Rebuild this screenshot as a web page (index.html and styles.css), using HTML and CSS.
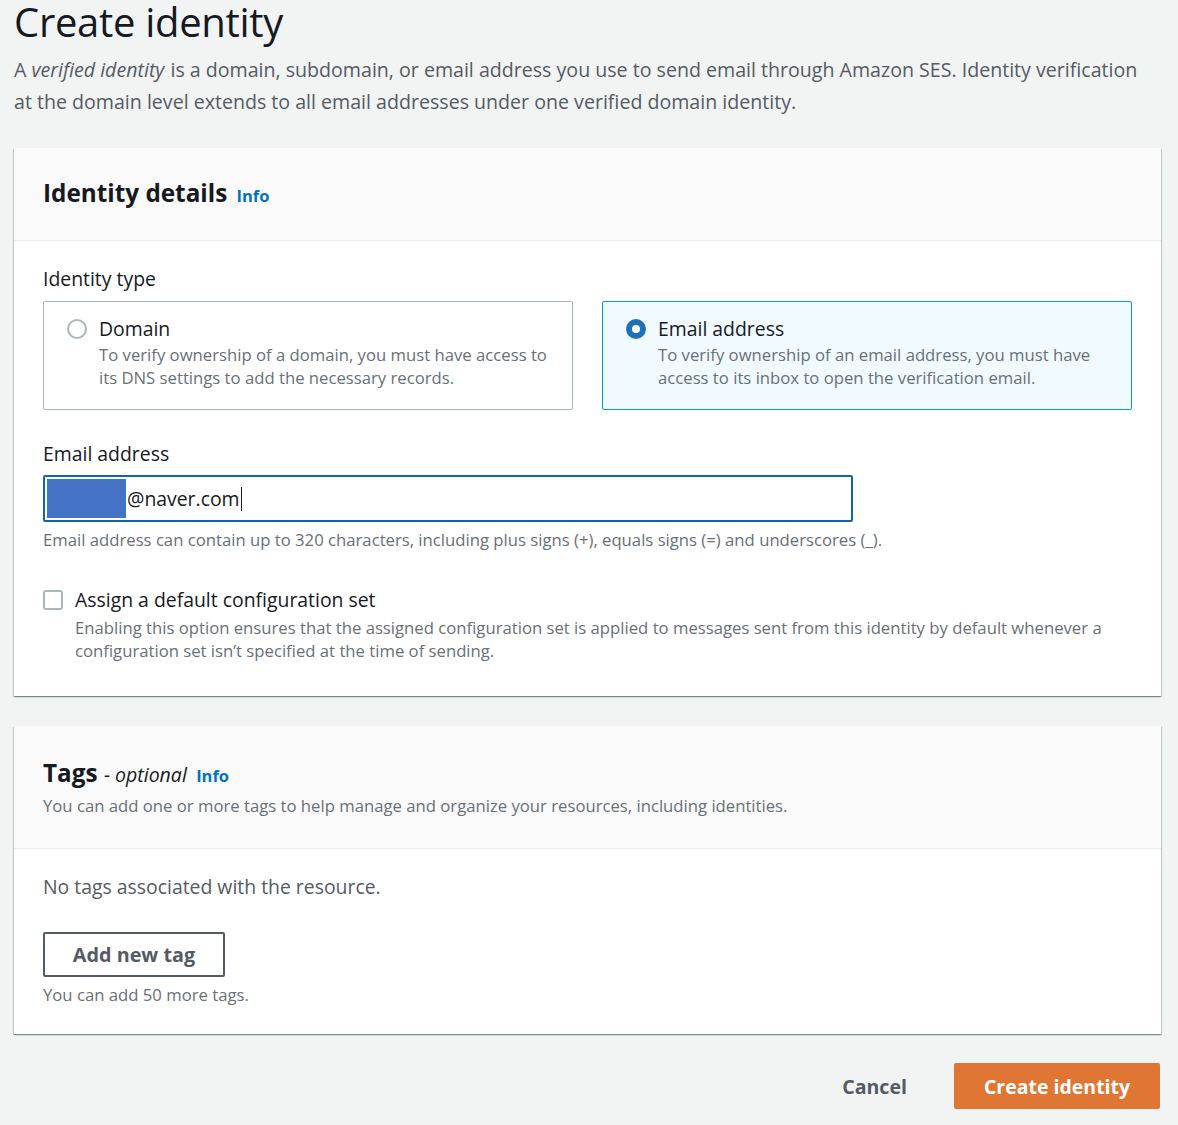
FILE: index.html
```html
<!DOCTYPE html>
<html lang="en">
<head>
<meta charset="utf-8">
<title>Create identity</title>
<link rel="stylesheet" href="styles.css">
</head>
<body>
<div class="page">
  <header class="page-head">
    <h1>Create identity</h1>
    <p class="lead">A <em>verified identity</em> is a domain, subdomain, or email address you use to send email through Amazon SES. Identity verification at the domain level extends to all email addresses under one verified domain identity.</p>
  </header>

  <section class="card">
    <div class="card-head">
      <h2>Identity details <a class="info" href="#">Info</a></h2>
    </div>
    <div class="card-body">
      <div class="label">Identity type</div>
      <div class="tiles">
        <div class="tile">
          <span class="radio"></span>
          <div class="tile-text">
            <div class="tile-title">Domain</div>
            <div class="desc">To verify ownership of a domain, you must have access to its DNS settings to add the necessary records.</div>
          </div>
        </div>
        <div class="tile selected">
          <span class="radio checked"></span>
          <div class="tile-text">
            <div class="tile-title">Email address</div>
            <div class="desc">To verify ownership of an email address, you must have access to its inbox to open the verification email.</div>
          </div>
        </div>
      </div>

      <div class="label email-label">Email address</div>
      <div class="input"><span class="redact"></span><span class="value">@naver.com</span><span class="caret"></span></div>
      <div class="desc constraint">Email address can contain up to 320 characters, including plus signs (+), equals signs (=) and underscores (_).</div>

      <div class="check-row">
        <span class="checkbox"></span>
        <div class="check-text">
          <div class="check-title">Assign a default configuration set</div>
          <div class="desc">Enabling this option ensures that the assigned configuration set is applied to messages sent from this identity by default whenever a configuration set isn’t specified at the time of sending.</div>
        </div>
      </div>
    </div>
  </section>

  <section class="card">
    <div class="card-head tags-head">
      <h2>Tags <span class="optional">- optional</span> <a class="info" href="#">Info</a></h2>
      <div class="desc head-desc">You can add one or more tags to help manage and organize your resources, including identities.</div>
    </div>
    <div class="card-body tags-body">
      <div class="empty">No tags associated with the resource.</div>
      <button class="btn-normal" type="button">Add new tag</button>
      <div class="desc after-btn">You can add 50 more tags.</div>
    </div>
  </section>

  <footer class="actions">
    <button class="btn-link" type="button">Cancel</button>
    <button class="btn-primary" type="button">Create identity</button>
  </footer>
</div>
</body>
</html>
```

FILE: styles.css
```css
html, body {
  margin: 0;
  padding: 0;
  background: #f2f3f3;
}

body {
  font-family: "Open Sans", "Noto Sans", sans-serif;
  color: #16191f;
}

.page {
  padding: 0 17px 0 14px;
}

.page-head h1 {
  margin: 0;
  font-size: 40px;
  line-height: 44px;
  font-weight: 400;
  color: #16191f;
  letter-spacing: -0.3px;
}

.lead {
  margin: 10px 0 0;
  max-width: 1140px;
  font-size: 19.6px;
  line-height: 32px;
  color: #545b64;
}

.lead em {
  padding-right: 1px;
}

.card {
  margin-top: 30px;
  background: #fff;
  box-shadow: 0 1px 1px 0 rgba(0, 28, 36, 0.3), 1px 1px 1px 0 rgba(0, 28, 36, 0.15), -1px 1px 1px 0 rgba(0, 28, 36, 0.15);
}

.card-head {
  background: #fafafa;
  border-bottom: 1px solid #eaeded;
  padding: 28px 29px 30px;
}

.card-head h2 {
  margin: 0;
  font-size: 24.3px;
  line-height: 34px;
  font-weight: 700;
  color: #16191f;
}

.info {
  margin-left: 3px;
  font-size: 16.5px;
  line-height: 1;
  font-weight: 700;
  color: #0073bb;
  text-decoration: none;
}

.card-body {
  padding: 24px 29px 34px;
}

.label {
  font-size: 19.4px;
  line-height: 28px;
  color: #16191f;
}

.desc {
  font-size: 16.7px;
  line-height: 23px;
  color: #687078;
}

.tiles {
  margin-top: 8px;
  display: grid;
  grid-template-columns: 530px 530px;
  column-gap: 29px;
}

.tile {
  display: flex;
  align-items: flex-start;
  gap: 12px;
  border: 1px solid #aab7b8;
  border-radius: 2px;
  padding: 13px 20px 20px 23px;
  background: #fff;
}

.tile.selected {
  border-color: #00a1c9;
  background: #f1faff;
}

.radio {
  flex: none;
  box-sizing: border-box;
  width: 20px;
  height: 20px;
  margin-top: 4px;
  border-radius: 50%;
  border: 2px solid #aab7b8;
  background: #fff;
}

.radio.checked {
  border: 6px solid #1f6fb9;
  background: #fff;
}

.tile-title {
  font-size: 19.4px;
  line-height: 28px;
  color: #16191f;
}

.tile-text .desc {
  margin-top: 0;
}

.email-label {
  margin-top: 30px;
}

.input {
  margin-top: 7px;
  box-sizing: border-box;
  width: 810px;
  height: 47px;
  border: 2px solid #0f65b5;
  border-radius: 2px;
  background: #fff;
  display: flex;
  align-items: center;
  padding: 0 2px;
}

.redact {
  width: 79px;
  height: 39px;
  background: #4472c4;
  flex: none;
}

.value {
  margin-left: 1px;
  font-size: 19.4px;
  line-height: 28px;
  color: #16191f;
}

.caret {
  width: 1.5px;
  height: 24px;
  background: #16191f;
  margin-left: 1px;
}

.constraint {
  margin-top: 6px;
}

.check-row {
  margin-top: 35px;
  display: flex;
  align-items: flex-start;
  gap: 12px;
}

.checkbox {
  flex: none;
  box-sizing: border-box;
  width: 20px;
  height: 20px;
  margin-top: 4px;
  border: 2px solid #aab7b8;
  border-radius: 3px;
  background: #fff;
}

.check-title {
  font-size: 19.4px;
  line-height: 28px;
  color: #16191f;
}

.check-text .desc {
  margin-top: 2px;
}

.tags-head {
  padding-top: 30px;
  padding-bottom: 31px;
}

.optional {
  font-size: 19.5px;
  line-height: 1;
  font-weight: 400;
  font-style: italic;
}

.head-desc {
  margin-top: 4px;
}

.tags-body {
  padding-bottom: 28px;
}

.empty {
  font-size: 19.4px;
  line-height: 28px;
  color: #545b64;
}

.btn-normal {
  display: block;
  margin-top: 31px;
  box-sizing: border-box;
  width: 182px;
  height: 45px;
  border: 2px solid #545b64;
  border-radius: 2px;
  background: #fff;
  color: #545b64;
  font-family: inherit;
  font-size: 19.8px;
  font-weight: 700;
  padding: 0;
  cursor: pointer;
}

.after-btn {
  margin-top: 6px;
}

.actions {
  margin-top: 29px;
  display: flex;
  justify-content: flex-end;
  align-items: center;
  gap: 27px;
  padding-right: 1px;
}

.btn-link {
  border: none;
  background: transparent;
  color: #545b64;
  font-family: inherit;
  font-size: 19.6px;
  font-weight: 700;
  padding: 0 20px;
  height: 46px;
  cursor: pointer;
}

.btn-primary {
  box-sizing: border-box;
  width: 206px;
  height: 46px;
  border: none;
  border-radius: 2px;
  background: #e07633;
  color: #fff;
  font-family: inherit;
  font-size: 19.5px;
  font-weight: 700;
  padding: 0;
  cursor: pointer;
}
```
